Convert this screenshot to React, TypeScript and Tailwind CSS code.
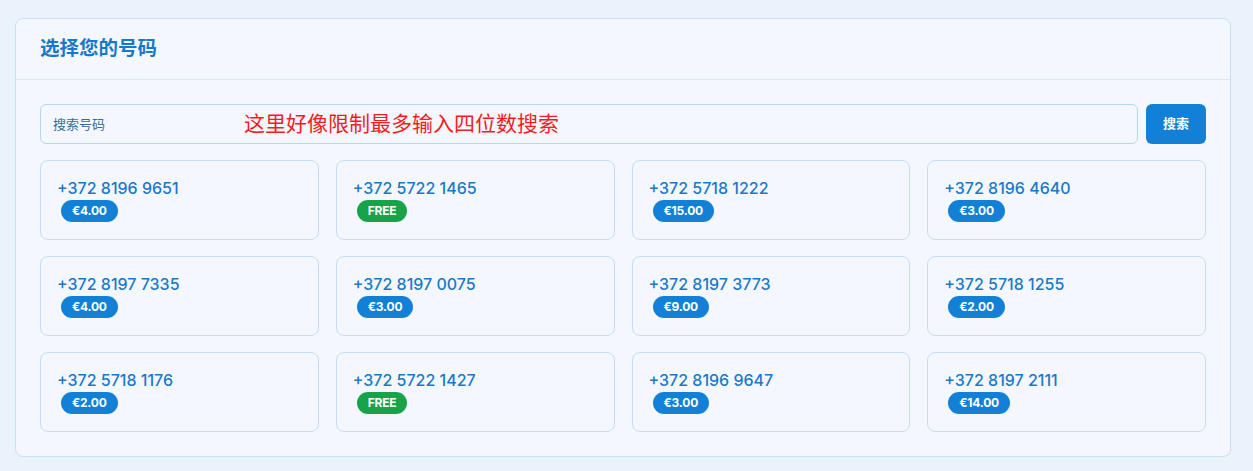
import { useState } from "react";

/* ========================================
   NUMBER PICKER — choose a phone number
======================================== */

interface NumberItem {
  number: string;
  price: string;
  free?: boolean;
}

const numbers: NumberItem[] = [
  { number: "+372 8196 9651", price: "€4.00" },
  { number: "+372 5722 1465", price: "FREE", free: true },
  { number: "+372 5718 1222", price: "€15.00" },
  { number: "+372 8196 4640", price: "€3.00" },
  { number: "+372 8197 7335", price: "€4.00" },
  { number: "+372 8197 0075", price: "€3.00" },
  { number: "+372 8197 3773", price: "€9.00" },
  { number: "+372 5718 1255", price: "€2.00" },
  { number: "+372 5718 1176", price: "€2.00" },
  { number: "+372 5722 1427", price: "FREE", free: true },
  { number: "+372 8196 9647", price: "€3.00" },
  { number: "+372 8197 2111", price: "€14.00" },
];

const font = "font-['Inter','Noto_Sans_CJK_SC',sans-serif]";

function NumberCard({ item }: { item: NumberItem }) {
  return (
    <button
      type="button"
      className="flex h-20 flex-col items-start rounded-lg border border-[#c2def4] bg-[#f4f8fe] px-4 pt-4 text-left transition-all hover:border-[#1380d7]"
    >
      <span className="text-[16px] leading-[22px] font-medium text-[#1a78c9]">
        {item.number}
      </span>
      <span
        className={`ml-1 mt-[1px] rounded-full px-[11px] text-[12px] leading-[22px] font-bold tracking-[-0.2px] text-white ${
          item.free ? "bg-[#17a34a]" : "bg-[#1380d7]"
        }`}
      >
        {item.price}
      </span>
    </button>
  );
}

export default function App() {
  const [query, setQuery] = useState("");

  return (
    <div className={`min-h-[471px] bg-[#eaf2fb] pl-[15px] pr-[22px] pt-[18px] ${font}`}>
      <div className="rounded-lg border border-[#c6e0f5] bg-[#f4f8fe]">
        {/* Header */}
        <div className="flex h-[61px] items-center border-b border-[#d6e7f6] px-6">
          <h2 className="text-[19.5px] font-bold text-[#1a78c9]">选择您的号码</h2>
        </div>

        {/* Body */}
        <div className="px-6 pt-6 pb-6">
          {/* Search row */}
          <div className="flex gap-2">
            <div className="relative flex-1">
              <input
                type="text"
                value={query}
                onChange={(e) => setQuery(e.target.value)}
                placeholder="搜索号码"
                className="h-10 w-full rounded-md border border-[#b4d6f0] bg-[#f4f8fe] px-3 text-[13px] text-[#2a6ea8] outline-none placeholder:text-[#3b6c98]"
              />
              {/* annotation */}
              <span className="pointer-events-none absolute left-[204px] top-[7px] text-[21px] leading-[26px] text-[#f21d1d]">
                这里好像限制最多输入四位数搜索
              </span>
            </div>
            <button
              type="button"
              className="h-10 w-[60px] rounded-md bg-[#1380d7] text-[13px] font-bold text-white hover:bg-[#1170be]"
            >
              搜索
            </button>
          </div>

          {/* Number grid */}
          <div className="mt-4 grid grid-cols-4 gap-x-[17px] gap-y-4">
            {numbers.map((item) => (
              <NumberCard key={item.number} item={item} />
            ))}
          </div>
        </div>
      </div>
    </div>
  );
}
